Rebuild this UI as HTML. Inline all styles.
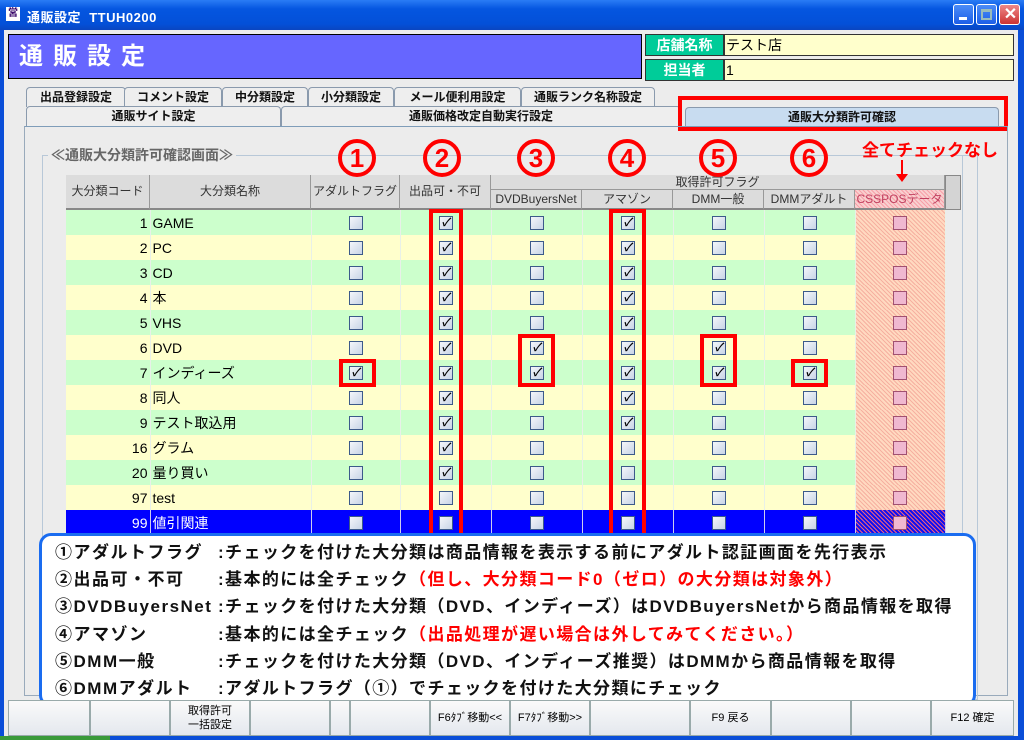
<!DOCTYPE html>
<html><head><meta charset="utf-8">
<style>
*{box-sizing:border-box;margin:0;padding:0}
body{width:1024px;height:740px;overflow:hidden;position:relative;background:#0a4ed8;font-family:"Liberation Sans","Noto Sans CJK JP",sans-serif;}
.abs{position:absolute}
#title{left:0;top:0;width:1024px;height:30px;background:linear-gradient(#2a7cf5,#0556e0 30%,#0350d8 80%,#0a45c0);color:#fff;font-weight:bold;font-size:13px;}
#client{left:4px;top:30px;width:1014px;height:706px;background:#ececec;}
.tb{top:4px;width:21px;height:21px;border:1px solid #fff;border-radius:3px;background:linear-gradient(#4b8cf7,#1c5ee8)}
.tab{position:absolute;height:20px;background:#eeeeee;border:1px solid #8a9aad;border-bottom:none;font-size:12px;font-weight:bold;text-align:center;line-height:19px;color:#111;border-radius:4px 4px 0 0}
table{border-collapse:collapse;table-layout:fixed}
td{height:25px;border-right:1px solid #e8f0e8;padding:0;font-size:14px;text-align:center}
.g td{background:#ccffcc}
.y td{background:#ffffcc}
.b td{background:#0000ff;color:#fff;border-right:1px solid #cce}
td.c{text-align:right;padding-right:2px}
td.n{text-align:left;padding-left:2px}
.cb{display:inline-block;width:14px;height:14px;border:1px solid #3c5a8a;background:linear-gradient(135deg,#f4f6fa,#c8d4e6);vertical-align:middle;position:relative;top:-1px;font-size:11px;line-height:12px;color:#000;font-weight:bold;text-align:center}
.h td.hp{background:repeating-linear-gradient(45deg,#f6b0a0 0 1px,transparent 1px 3px),#ffd9c0}
.b td.hp{background:repeating-linear-gradient(45deg,#f06080 0 1px,#1010f0 1px 3px)}
.hp .cb{background:#f0b8d0;border-color:#a05070}
.hd{position:absolute;background:#dcdcdc;border-right:1px solid #999;border-bottom:2px solid #888;font-size:12px;color:#333;text-align:center}
.circ{position:absolute;width:38px;height:38px;border:4px solid #f00;border-radius:50%;color:#f00;font-weight:bold;font-size:26px;line-height:30px;text-align:center}
.rb{position:absolute;border:4px solid #f00}
.btn{position:absolute;top:670px;height:36px;border:1px solid #9aa;background:linear-gradient(#fafafa,#e4e8ee);font-size:11px;text-align:center;line-height:34px;color:#000}
.lg{font-size:17px;font-weight:bold;color:#111;line-height:27.2px;white-space:nowrap;letter-spacing:1.4px}
.lg span.r{color:#f00}
.lg b{display:inline-block;width:163px;font-weight:bold;letter-spacing:1.5px;white-space:nowrap}
</style></head><body>
<div id="title" class="abs">
 <div class="abs" style="left:6px;top:7px;width:14px;height:14px;background:#fff;color:#306;font-size:10px;line-height:14px;text-align:center">営</div>
 <div class="abs" style="left:27px;top:7px;letter-spacing:0.5px">通販設定&nbsp;&nbsp;TTUH0200</div>
 <div class="abs tb" style="left:953px"><div class="abs" style="left:5px;top:12px;width:8px;height:3px;background:#fff"></div></div>
 <div class="abs tb" style="left:976px"><div class="abs" style="left:4px;top:4px;width:11px;height:11px;border:2px solid #9bb;border-top-width:3px"></div></div>
 <div class="abs tb" style="left:999px;background:linear-gradient(#e88,#c33)"><div class="abs" style="left:1px;top:-1px;width:19px;color:#fff;font-size:16px;text-align:center">✕</div></div>
</div>
<div id="client" class="abs">
 <div class="abs" style="left:4px;top:4px;width:634px;height:45px;background:#6666ff;border:1px solid #000;color:#fff;font-size:24px;font-weight:bold;line-height:43px;padding-left:10px;letter-spacing:10px">通販設定</div>
 <div class="abs" style="left:641px;top:4px;width:79px;height:22px;background:#00cc99;border:1px solid #333;color:#fff;font-weight:bold;font-size:14px;text-align:center;line-height:20px">店舗名称</div>
 <div class="abs" style="left:720px;top:4px;width:290px;height:22px;background:#ffffcc;border:1px solid #333;font-size:14px;line-height:20px;padding-left:1px">テスト店</div>
 <div class="abs" style="left:641px;top:29px;width:79px;height:22px;background:#00cc99;border:1px solid #333;color:#fff;font-weight:bold;font-size:14px;text-align:center;line-height:20px">担当者</div>
 <div class="abs" style="left:720px;top:29px;width:290px;height:22px;background:#ffffcc;border:1px solid #333;font-size:14px;line-height:20px;padding-left:1px">1</div>

 <div class="tab" style="left:22px;top:57px;width:100px">出品登録設定</div>
 <div class="tab" style="left:120px;top:57px;width:98px">コメント設定</div>
 <div class="tab" style="left:218px;top:57px;width:86px">中分類設定</div>
 <div class="tab" style="left:304px;top:57px;width:86px">小分類設定</div>
 <div class="tab" style="left:390px;top:57px;width:127px">メール便利用設定</div>
 <div class="tab" style="left:517px;top:57px;width:134px">通販ランク名称設定</div>
 <div class="tab" style="left:22px;top:76px;width:255px">通販サイト設定</div>
 <div class="tab" style="left:277px;top:76px;width:400px">通販価格改定自動実行設定</div>
 <div class="tab" style="left:681px;top:77px;width:314px;background:#c8dcf0">通販大分類許可確認</div>
 <div class="rb" style="left:674px;top:66px;width:330px;height:35px"></div>

 <div class="abs" style="left:20px;top:96px;width:984px;height:570px;border:1px solid #99aabb;border-top:1px solid #7f9db9"></div>
 <div class="abs" style="left:38px;top:125px;width:936px;height:545px;border:1px solid #b8c8d8"></div>
 <div class="abs" style="left:958px;top:125px;width:1px;height:545px;background:#b8c8d8"></div>
 <div class="abs" style="left:44px;top:115px;background:#ececec;padding:0 3px;color:#666;font-size:14px;font-weight:bold">≪通販大分類許可確認画面≫</div>

 <div class="abs" style="left:62px;top:145px;width:895px;height:35px;background:#dcdcdc;border:1px solid #888"></div>
 <div class="hd" style="left:62px;top:145px;width:84px;height:35px;line-height:33px">大分類コード</div>
 <div class="hd" style="left:146px;top:145px;width:161px;height:35px;line-height:33px">大分類名称</div>
 <div class="hd" style="left:307px;top:145px;width:89px;height:35px;line-height:33px">アダルトフラグ</div>
 <div class="hd" style="left:396px;top:145px;width:91px;height:35px;line-height:33px">出品可・不可</div>
 <div class="hd" style="left:487px;top:145px;width:454px;height:15px;line-height:14px;border-bottom:1px solid #999">取得許可フラグ</div>
 <div class="hd" style="left:487px;top:160px;width:91px;height:20px;line-height:19px">DVDBuyersNet</div>
 <div class="hd" style="left:578px;top:160px;width:91px;height:20px;line-height:19px">アマゾン</div>
 <div class="hd" style="left:669px;top:160px;width:91px;height:20px;line-height:19px">DMM一般</div>
 <div class="hd" style="left:760px;top:160px;width:91px;height:20px;line-height:19px">DMMアダルト</div>
 <div class="hd" style="left:851px;top:160px;width:90px;height:20px;line-height:19px;color:#c04060;background:repeating-linear-gradient(45deg,#f8a0a8 0 1px,#f8d0d0 1px 3px)">CSSPOSデータ</div>

 <table class="abs" style="left:62px;top:180px;width:879px">
 <colgroup><col style="width:84px"><col style="width:161px"><col style="width:89px"><col style="width:91px"><col style="width:91px"><col style="width:91px"><col style="width:91px"><col style="width:91px"><col style="width:90px"></colgroup>
 <tr class="g h"><td class="c">1</td><td class="n">GAME</td><td><i class="cb"></i></td><td><i class="cb">✓</i></td><td><i class="cb"></i></td><td><i class="cb">✓</i></td><td><i class="cb"></i></td><td><i class="cb"></i></td><td class="hp"><i class="cb"></i></td></tr>
 <tr class="y h"><td class="c">2</td><td class="n">PC</td><td><i class="cb"></i></td><td><i class="cb">✓</i></td><td><i class="cb"></i></td><td><i class="cb">✓</i></td><td><i class="cb"></i></td><td><i class="cb"></i></td><td class="hp"><i class="cb"></i></td></tr>
 <tr class="g h"><td class="c">3</td><td class="n">CD</td><td><i class="cb"></i></td><td><i class="cb">✓</i></td><td><i class="cb"></i></td><td><i class="cb">✓</i></td><td><i class="cb"></i></td><td><i class="cb"></i></td><td class="hp"><i class="cb"></i></td></tr>
 <tr class="y h"><td class="c">4</td><td class="n">本</td><td><i class="cb"></i></td><td><i class="cb">✓</i></td><td><i class="cb"></i></td><td><i class="cb">✓</i></td><td><i class="cb"></i></td><td><i class="cb"></i></td><td class="hp"><i class="cb"></i></td></tr>
 <tr class="g h"><td class="c">5</td><td class="n">VHS</td><td><i class="cb"></i></td><td><i class="cb">✓</i></td><td><i class="cb"></i></td><td><i class="cb">✓</i></td><td><i class="cb"></i></td><td><i class="cb"></i></td><td class="hp"><i class="cb"></i></td></tr>
 <tr class="y h"><td class="c">6</td><td class="n">DVD</td><td><i class="cb"></i></td><td><i class="cb">✓</i></td><td><i class="cb">✓</i></td><td><i class="cb">✓</i></td><td><i class="cb">✓</i></td><td><i class="cb"></i></td><td class="hp"><i class="cb"></i></td></tr>
 <tr class="g h"><td class="c">7</td><td class="n">インディーズ</td><td><i class="cb">✓</i></td><td><i class="cb">✓</i></td><td><i class="cb">✓</i></td><td><i class="cb">✓</i></td><td><i class="cb">✓</i></td><td><i class="cb">✓</i></td><td class="hp"><i class="cb"></i></td></tr>
 <tr class="y h"><td class="c">8</td><td class="n">同人</td><td><i class="cb"></i></td><td><i class="cb">✓</i></td><td><i class="cb"></i></td><td><i class="cb">✓</i></td><td><i class="cb"></i></td><td><i class="cb"></i></td><td class="hp"><i class="cb"></i></td></tr>
 <tr class="g h"><td class="c">9</td><td class="n">テスト取込用</td><td><i class="cb"></i></td><td><i class="cb">✓</i></td><td><i class="cb"></i></td><td><i class="cb">✓</i></td><td><i class="cb"></i></td><td><i class="cb"></i></td><td class="hp"><i class="cb"></i></td></tr>
 <tr class="y h"><td class="c">16</td><td class="n">グラム</td><td><i class="cb"></i></td><td><i class="cb">✓</i></td><td><i class="cb"></i></td><td><i class="cb"></i></td><td><i class="cb"></i></td><td><i class="cb"></i></td><td class="hp"><i class="cb"></i></td></tr>
 <tr class="g h"><td class="c">20</td><td class="n">量り買い</td><td><i class="cb"></i></td><td><i class="cb">✓</i></td><td><i class="cb"></i></td><td><i class="cb"></i></td><td><i class="cb"></i></td><td><i class="cb"></i></td><td class="hp"><i class="cb"></i></td></tr>
 <tr class="y h"><td class="c">97</td><td class="n">test</td><td><i class="cb"></i></td><td><i class="cb"></i></td><td><i class="cb"></i></td><td><i class="cb"></i></td><td><i class="cb"></i></td><td><i class="cb"></i></td><td class="hp"><i class="cb"></i></td></tr>
 <tr class="b"><td class="c">99</td><td class="n">値引関連</td><td><i class="cb"></i></td><td><i class="cb"></i></td><td><i class="cb"></i></td><td><i class="cb"></i></td><td><i class="cb"></i></td><td><i class="cb"></i></td><td class="hp"><i class="cb"></i></td></tr>
 </table>
 <div class="abs" style="left:941px;top:145px;width:16px;height:35px;background:#d4d4d4;border:1px solid #888"></div>

 <div class="circ" style="left:334px;top:109px">1</div>
 <div class="circ" style="left:419px;top:109px">2</div>
 <div class="circ" style="left:513px;top:109px">3</div>
 <div class="circ" style="left:604px;top:109px">4</div>
 <div class="circ" style="left:695px;top:109px">5</div>
 <div class="circ" style="left:786px;top:109px">6</div>
 <div class="abs" style="left:858px;top:106px;color:#f00;font-size:17px;font-weight:bold;white-space:nowrap">全てチェックなし</div>
 <div class="abs" style="left:897px;top:130px;width:2px;height:18px;background:#f00"></div>
 <div class="abs" style="left:892px;top:144px;width:0;height:0;border-left:6px solid transparent;border-right:6px solid transparent;border-top:8px solid #f00"></div>

 <div class="rb" style="left:335px;top:329px;width:37px;height:28px"></div>
 <div class="rb" style="left:425px;top:179px;width:34px;height:335px"></div>
 <div class="rb" style="left:514px;top:304px;width:37px;height:53px"></div>
 <div class="rb" style="left:605px;top:179px;width:37px;height:335px"></div>
 <div class="rb" style="left:696px;top:304px;width:37px;height:53px"></div>
 <div class="rb" style="left:787px;top:329px;width:37px;height:28px"></div>

 <div class="abs" style="left:35px;top:503px;width:937px;height:174px;background:#fff;border:3px solid #1a6cf0;border-radius:12px;padding:3px 0 0 13px">
  <div class="lg"><b>①アダルトフラグ</b>:チェックを付けた大分類は商品情報を表示する前にアダルト認証画面を先行表示</div>
  <div class="lg"><b>②出品可・不可</b>:基本的には全チェック<span class="r">（但し、大分類コード0（ゼロ）の大分類は対象外）</span></div>
  <div class="lg"><b>③DVDBuyersNet</b>:チェックを付けた大分類（DVD、インディーズ）はDVDBuyersNetから商品情報を取得</div>
  <div class="lg"><b>④アマゾン</b>:基本的には全チェック<span class="r">（出品処理が遅い場合は外してみてください。）</span></div>
  <div class="lg"><b>⑤DMM一般</b>:チェックを付けた大分類（DVD、インディーズ推奨）はDMMから商品情報を取得</div>
  <div class="lg"><b>⑥DMMアダルト</b>:アダルトフラグ（①）でチェックを付けた大分類にチェック</div>
 </div>

 <div class="btn" style="left:4px;width:82px"></div>
 <div class="btn" style="left:86px;width:80px"></div>
 <div class="btn" style="left:166px;width:80px;line-height:14px;padding-top:3px">取得許可<br>一括設定</div>
 <div class="btn" style="left:246px;width:80px"></div>
 <div class="btn" style="left:326px;width:20px"></div>
 <div class="btn" style="left:346px;width:80px"></div>
 <div class="btn" style="left:426px;width:80px">F6ﾀﾌﾞ移動&lt;&lt;</div>
 <div class="btn" style="left:506px;width:80px">F7ﾀﾌﾞ移動&gt;&gt;</div>
 <div class="btn" style="left:586px;width:100px"></div>
 <div class="btn" style="left:686px;width:81px">F9 戻る</div>
 <div class="btn" style="left:767px;width:80px"></div>
 <div class="btn" style="left:847px;width:80px"></div>
 <div class="btn" style="left:927px;width:83px">F12 確定</div>
</div>
<div class="abs" style="left:0;top:736px;width:110px;height:4px;background:#3a9a3a"></div>
</body></html>
